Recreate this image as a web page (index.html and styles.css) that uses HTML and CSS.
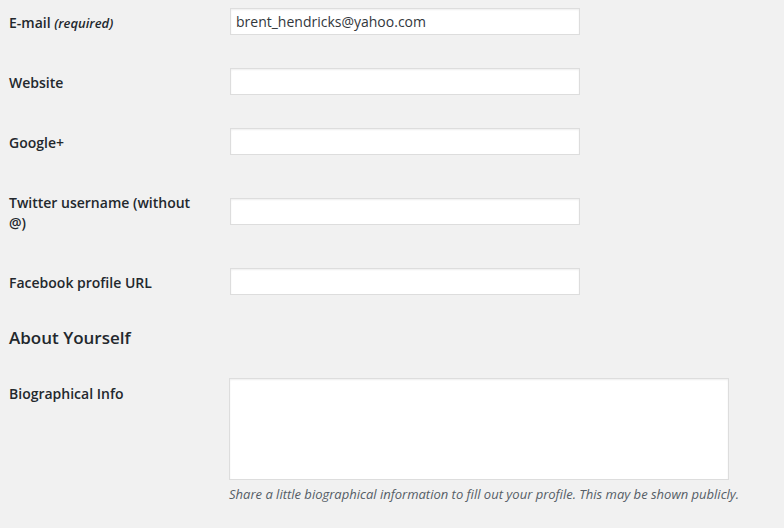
FILE: index.html
```html
<!DOCTYPE html>
<html>
<head>
<meta charset="utf-8">
<link rel="stylesheet" href="styles.css">
</head>
<body>
<div class="wrap">
  <div class="form-table first">
    <div class="row">
      <div class="th"><label>E-mail <span class="req">(required)</span></label></div>
      <div class="td"><input class="regular-text" type="text" value="brent_hendricks@yahoo.com"></div>
    </div>
    <div class="row">
      <div class="th"><label>Website</label></div>
      <div class="td"><input class="regular-text" type="text" value=""></div>
    </div>
    <div class="row">
      <div class="th"><label>Google+</label></div>
      <div class="td"><input class="regular-text" type="text" value=""></div>
    </div>
    <div class="row tall">
      <div class="th"><label>Twitter username (without @)</label></div>
      <div class="td"><input class="regular-text" type="text" value=""></div>
    </div>
    <div class="row">
      <div class="th"><label>Facebook profile URL</label></div>
      <div class="td"><input class="regular-text" type="text" value=""></div>
    </div>
  </div>
  <h2 class="section-title">About Yourself</h2>
  <div class="form-table">
    <div class="row">
      <div class="th"><label>Biographical Info</label></div>
      <div class="td bio">
        <textarea class="bio-text"></textarea>
        <p class="description">Share a little biographical information to fill out your profile. This may be shown publicly.</p>
      </div>
    </div>
  </div>
</div>
</body>
</html>
```
FILE: styles.css
```css
html, body {
  margin: 0;
  padding: 0;
  background: #f1f1f1;
}
body {
  font-family: "Open Sans", "Liberation Sans", sans-serif;
  font-size: 14px;
  color: #23282d;
  overflow: hidden;
}
.wrap {
  padding: 0 0 0 9px;
}
.form-table.first {
  margin-top: -8px;
}
.row {
  display: flex;
  align-items: flex-start;
}
.th {
  width: 195px;
  flex: none;
  padding: 21px 26px 19px 0;
  line-height: 20px;
  font-weight: 600;
}
.req {
  font-style: italic;
  font-size: 13px;
}
.td {
  padding-top: 16px;
}
.row.tall .td {
  padding-top: 26px;
}
.regular-text {
  box-sizing: border-box;
  width: 350px;
  height: 27px;
  margin: 0;
  padding: 3px 5px;
  border: 1px solid #ddd;
  box-shadow: inset 0 1px 2px rgba(0,0,0,.07);
  background: #fff;
  font-family: "Open Sans", "Liberation Sans", sans-serif;
  font-size: 14px;
  color: #32373c;
  outline: none;
}
.section-title {
  margin: 14px 0 13px;
  font-size: 17px;
  line-height: 24px;
  font-weight: 600;
  color: #23282d;
}
.td.bio {
  padding-top: 15px;
  margin-left: -1px;
}
.bio-text {
  display: block;
  box-sizing: border-box;
  width: 500px;
  height: 102px;
  margin: 0;
  border: 1px solid #ddd;
  box-shadow: inset 0 1px 2px rgba(0,0,0,.07);
  background: #fff;
  resize: none;
  outline: none;
}
.description {
  margin: 4px 0 0;
  font-size: 13px;
  line-height: 20px;
  font-style: italic;
  color: #555d66;
}
```
